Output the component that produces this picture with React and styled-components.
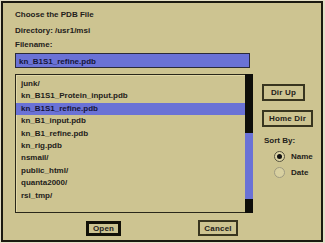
import React from "react";
import styled, { createGlobalStyle } from "styled-components";

const Global = createGlobalStyle`
  html, body { margin: 0; padding: 0; background: #e4dfc6; }
  body {
    font-family: "Liberation Sans", Arial, sans-serif;
    font-weight: bold;
    font-size: 8px;
    color: #23211a;
  }
  * { box-sizing: border-box; }
`;

const Frame = styled.div`
  margin: 1px 0 0 1px;
  width: 322px;
  height: 241px;
  border: 2px solid #1b1a10;
  background: #cdc491;
  padding: 7px 0 0 12px;
  display: flex;
  flex-direction: column;
`;

const Label = styled.div`
  height: 10px;
  line-height: 10px;
  margin-top: ${(p) => p.$mt || 0}px;
  margin-left: ${(p) => p.$ml || 0}px;
  white-space: nowrap;
`;

const FileInput = styled.div`
  margin-top: 3px;
  width: 235px;
  height: 15px;
  border: 1px solid #2a2a3a;
  background: #6a72d6;
  padding: 2px 0 0 3px;
  line-height: 11px;
  color: #15153a;
  overflow: hidden;
  white-space: nowrap;
`;

const Body = styled.div`
  margin-top: 6px;
  display: flex;
`;

const ListWrap = styled.div`
  display: flex;
  width: 238px;
  height: 139px;
`;

const List = styled.div`
  flex: 1;
  border: 1px solid #2a281a;
  border-right: none;
  box-shadow: inset 1px 1px 0 #e2d9a8;
  padding-top: 3px;
  overflow: hidden;
`;

const Row = styled.div`
  height: 12.4px;
  line-height: 12.4px;
  padding-left: 5px;
  white-space: nowrap;
  background: ${(p) => (p.$selected ? "#6a72d6" : "transparent")};
  color: ${(p) => (p.$selected ? "#15153a" : "#23211a")};
`;

const Scrollbar = styled.div`
  width: 8px;
  background: #0e0e0a;
  padding-top: 59px;
`;

const Thumb = styled.div`
  height: 66px;
  background: #6a72d6;
`;

const Side = styled.div`
  margin-left: 9px;
  padding-top: 10px;
  display: flex;
  flex-direction: column;
  align-items: flex-start;
`;

const Button = styled.div`
  width: ${(p) => p.$w}px;
  height: ${(p) => p.$h || 17}px;
  margin-top: ${(p) => p.$mt || 0}px;
  border: ${(p) => (p.$default ? "3px solid #121108" : "2px solid #38351f")};
  display: flex;
  align-items: center;
  justify-content: center;
  color: #23211a;
  white-space: nowrap;
  letter-spacing: 0.2px;
`;

const RadioRow = styled.div`
  display: flex;
  align-items: center;
  height: 16px;
  padding-left: 11.5px;
  gap: 6.5px;
`;

const RadioCircle = styled.div`
  width: 11px;
  height: 11px;
  border-radius: 50%;
  border: 1px solid ${(p) => (p.$on ? "#55523e" : "#9e9a80")};
  background: ${(p) => (p.$on ? "#ddd5a6" : "#d8d0a0")};
  display: flex;
  align-items: center;
  justify-content: center;
`;

const Dot = styled.div`
  width: 5px;
  height: 5px;
  border-radius: 50%;
  background: #111;
`;

const Footer = styled.div`
  margin-top: 7px;
  display: flex;
  align-items: flex-end;
  padding-left: 71px;
  gap: 77px;
`;

const files = [
  "junk/",
  "kn_B1S1_Protein_input.pdb",
  "kn_B1S1_refine.pdb",
  "kn_B1_input.pdb",
  "kn_B1_refine.pdb",
  "kn_rig.pdb",
  "nsmail/",
  "public_html/",
  "quanta2000/",
  "rsi_tmp/",
];

export default function App() {
  return (
    <>
      <Global />
      <Frame>
        <Label>Choose the PDB File</Label>
        <Label $mt={6}>Directory: /usr1/msi</Label>
        <Label $mt={4}>Filename:</Label>
        <FileInput>kn_B1S1_refine.pdb</FileInput>
        <Body>
          <ListWrap>
            <List>
              {files.map((f, i) => (
                <Row key={f} $selected={i === 2}>
                  {f}
                </Row>
              ))}
            </List>
            <Scrollbar>
              <Thumb />
            </Scrollbar>
          </ListWrap>
          <Side>
            <Button $w={43}>Dir Up</Button>
            <Button $w={51} $mt={9}>Home Dir</Button>
            <Label $mt={9} $ml={2}>Sort By:</Label>
            <RadioRow style={{ marginTop: 2 }}>
              <RadioCircle $on>
                <Dot />
              </RadioCircle>
              <span>Name</span>
            </RadioRow>
            <RadioRow>
              <RadioCircle />
              <span>Date</span>
            </RadioRow>
          </Side>
        </Body>
        <Footer>
          <Button $w={35} $h={15} $default>Open</Button>
          <Button $w={40} $h={16}>Cancel</Button>
        </Footer>
      </Frame>
    </>
  );
}
